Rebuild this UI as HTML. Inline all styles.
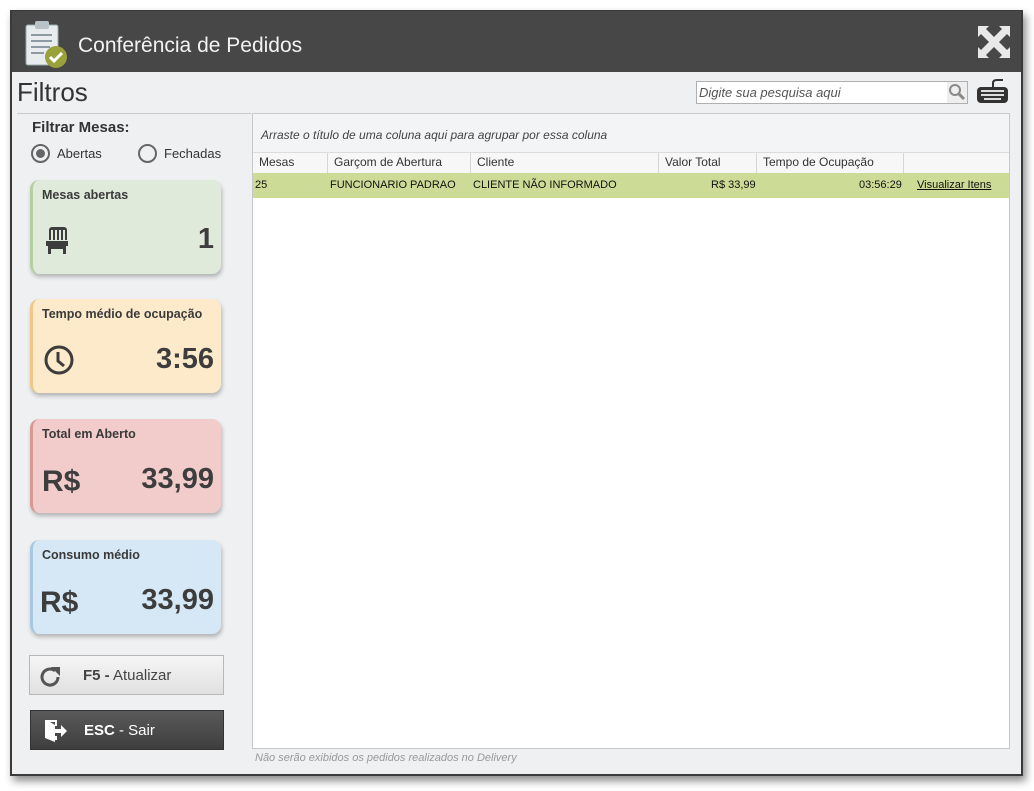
<!DOCTYPE html>
<html><head><meta charset="utf-8"><style>
*{box-sizing:border-box;margin:0;padding:0}
body{width:1034px;height:791px;background:#fff;font-family:"Liberation Sans",sans-serif;position:relative;overflow:hidden;color:#333}
.win{position:absolute;left:10px;top:10px;width:1013px;height:766px;background:#eff0f2;border:2px solid #3a3a3a;border-top:1px solid #3a3a3a;box-shadow:3px 5px 8px rgba(0,0,0,.45)}
.title{position:absolute;left:0;top:0;width:100%;height:61px;background:#474747}
.title span{position:absolute;left:66px;top:23px;color:#f2f2f2;font-size:21px}
.abs{position:absolute}
.card{position:absolute;left:30px;width:191px;height:94px;border-radius:9px;box-shadow:1px 3px 4px rgba(0,0,0,.25)}
.card .t{position:absolute;left:9px;top:8px;font-size:12.5px;font-weight:bold;color:#3a3a3a}
.card .v{position:absolute;right:7px;bottom:14px;font-size:29px;font-weight:bold;color:#3d3d3d}
.grid{position:absolute;left:252px;top:113px;width:758px;height:636px;background:#fff;border:1px solid #c8c8c8}
.hd{position:absolute;top:39px;height:20px;font-size:12px;color:#333;padding:2px 6px;border-right:1px solid #d6d6d6}
.row{position:absolute;left:0;top:59px;width:756px;height:25px;background:#ccdc96;font-size:11px;color:#111}
.row span{position:absolute;top:6px}
</style></head><body>
<div class="win">
 <div class="title">
  <svg class="abs" style="left:12px;top:8px" width="46" height="50" viewBox="0 0 46 50">
   <rect x="2" y="6" width="32" height="40" rx="2" fill="#e8ecef" stroke="#9aa" stroke-width="1"/>
   <rect x="11" y="2" width="14" height="8" rx="2" fill="#b9c2c7"/>
   <g stroke="#8d9aa2" stroke-width="2"><line x1="7" y1="16" x2="28" y2="16"/><line x1="7" y1="22" x2="28" y2="22"/><line x1="7" y1="28" x2="26" y2="28"/><line x1="7" y1="34" x2="20" y2="34"/></g>
   <circle cx="32" cy="38" r="11" fill="#9aa03a"/>
   <path d="M26 38 l4 4 l8 -8" stroke="#fff" stroke-width="3" fill="none"/>
  </svg>
  <span>Conferência de Pedidos</span>
  <svg class="abs" style="left:966px;top:15px" width="32" height="32" viewBox="0 0 32 32" fill="#e8e8e8">
   <path d="M0 0h11l-3 3 8 8 8-8-3-3h11v11l-3-3-8 8 8 8 3-3v11h-11l3-3-8-8-8 8 3 3h-11v-11l3 3 8-8-8-8-3 3z"/>
  </svg>
 </div>
</div>
<div class="abs" style="left:17px;top:77px;font-size:26px;color:#333">Filtros</div>
<div class="abs" style="left:17px;top:113px;width:234px;height:1px;background:#c8c8c8"></div>
<div class="abs" style="left:32px;top:119px;font-size:15px;font-weight:bold;color:#333">Filtrar Mesas:</div>
<div class="abs" style="left:31px;top:144px;width:19px;height:19px;border:2px solid #666;border-radius:50%"><div style="margin:3px;width:9px;height:9px;border-radius:50%;background:#666"></div></div>
<div class="abs" style="left:57px;top:146px;font-size:13px">Abertas</div>
<div class="abs" style="left:138px;top:144px;width:19px;height:19px;border:2px solid #666;border-radius:50%"></div>
<div class="abs" style="left:164px;top:146px;font-size:13px">Fechadas</div>

<div class="card" style="top:180px;background:#dfeada;border-left:3px solid #b4d0a0"><div class="t">Mesas abertas</div>
 <svg class="abs" style="left:12px;top:45px" width="24" height="30" viewBox="0 0 24 30" fill="#3d3d3d"><path d="M5 2h14a3 3 0 0 1 3 3v10h-2v-10h-2v10h-2v-10h-2v10h-2v-10h-2v10h-2v-10h-2v10h-2v-10a3 3 0 0 1 3-3z M1 16h22v5h-2v8h-3v-5h-12v5h-3v-8h-2z"/></svg>
 <div class="v" style="bottom:18px">1</div></div>
<div class="card" style="top:299px;background:#fdeacb;border-left:3px solid #ecc98a"><div class="t">Tempo médio de ocupação</div>
 <svg class="abs" style="left:10px;top:45px" width="32" height="32" viewBox="0 0 32 32"><circle cx="16" cy="16" r="13" fill="none" stroke="#3d3d3d" stroke-width="3"/><path d="M15 8v9l6 5" fill="none" stroke="#3d3d3d" stroke-width="3"/></svg>
 <div class="v" style="bottom:17px">3:56</div></div>
<div class="card" style="top:419px;background:#f2cbcb;border-left:3px solid #d59a92"><div class="t">Total em Aberto</div>
 <div class="abs" style="left:9px;top:46px;font-size:30px;font-weight:bold;color:#3d3d3d">R$</div>
 <div class="v" style="bottom:17px">33,99</div></div>
<div class="card" style="top:540px;background:#d6e8f5;border-left:3px solid #a8c8e2"><div class="t">Consumo médio</div>
 <div class="abs" style="left:7px;top:46px;font-size:30px;font-weight:bold;color:#3d3d3d">R$</div>
 <div class="v" style="bottom:17px">33,99</div></div>

<div class="abs" style="left:29px;top:655px;width:195px;height:40px;border:1px solid #b8b8b8;background:linear-gradient(#f6f6f6,#e0e0e0)">
 <svg class="abs" style="left:8px;top:9px" width="24" height="24" viewBox="0 0 24 24"><path d="M20 12a8 8 0 1 1-3-6.2" fill="none" stroke="#555" stroke-width="3"/><path d="M13 2h9v9z" fill="#555"/></svg>
 <div class="abs" style="left:53px;top:11px;font-size:15px;color:#444"><b>F5 -</b> Atualizar</div></div>
<div class="abs" style="left:30px;top:710px;width:194px;height:40px;border:1px solid #333;background:linear-gradient(#5a5a5a,#3e3e3e)">
 <svg class="abs" style="left:12px;top:7px" width="26" height="26" viewBox="0 0 26 26" fill="#fff"><path d="M2 2h12v6h-2v-4h-5l5 3v17l-10-4z M14 18h-2v4h2z M12 11h6v-4l6 6-6 6v-4h-6z"/></svg>
 <div class="abs" style="left:53px;top:11px;font-size:15px;color:#fff"><b>ESC</b> - Sair</div></div>

<div class="abs" style="left:696px;top:81px;width:272px;height:23px;border:1px solid #b0b0b0;background:#fff">
 <div class="abs" style="left:2px;top:3px;font-size:13px;font-style:italic;color:#555">Digite sua pesquisa aqui</div>
 <div class="abs" style="right:0;top:0;width:20px;height:21px;background:#eee"><svg width="20" height="21" viewBox="0 0 20 21"><circle cx="8" cy="8" r="5" fill="none" stroke="#888" stroke-width="2"/><path d="M12 12l5 5" stroke="#888" stroke-width="3"/></svg></div></div>
<svg class="abs" style="left:976px;top:77px" width="33" height="28" viewBox="0 0 33 28"><path d="M17 10v-4q0-3 4-3h6" fill="none" stroke="#333" stroke-width="2"/><rect x="1" y="10" width="31" height="16" rx="4" fill="#333"/><g fill="#ddd"><rect x="5" y="13" width="23" height="2"/><rect x="5" y="17" width="23" height="2"/><rect x="8" y="21" width="17" height="2"/></g></svg>

<div class="grid">
 <div class="abs" style="left:0;top:0;width:756px;height:39px;background:#f3f4f6;border-bottom:1px solid #dcdcdc"></div>
 <div class="abs" style="left:8px;top:14px;font-size:12px;font-style:italic;color:#444">Arraste o título de uma coluna aqui para agrupar por essa coluna</div>
 <div class="abs" style="left:0;top:39px;width:756px;height:20px;background:#f7f7f8"></div>
 <div class="hd" style="left:0;width:75px">Mesas</div>
 <div class="hd" style="left:75px;width:143px">Garçom de Abertura</div>
 <div class="hd" style="left:218px;width:188px">Cliente</div>
 <div class="hd" style="left:406px;width:98px">Valor Total</div>
 <div class="hd" style="left:504px;width:147px">Tempo de Ocupação</div>
 <div class="row">
  <span style="left:2px">25</span><span style="left:77px">FUNCIONARIO PADRAO</span><span style="left:220px">CLIENTE NÃO INFORMADO</span>
  <span style="left:458px">R$ 33,99</span><span style="left:606px">03:56:29</span><span style="left:664px;text-decoration:underline">Visualizar Itens</span>
 </div>
</div>
<div class="abs" style="left:255px;top:752px;font-size:11px;font-style:italic;color:#999">Não serão exibidos os pedidos realizados no Delivery</div>
</body></html>
